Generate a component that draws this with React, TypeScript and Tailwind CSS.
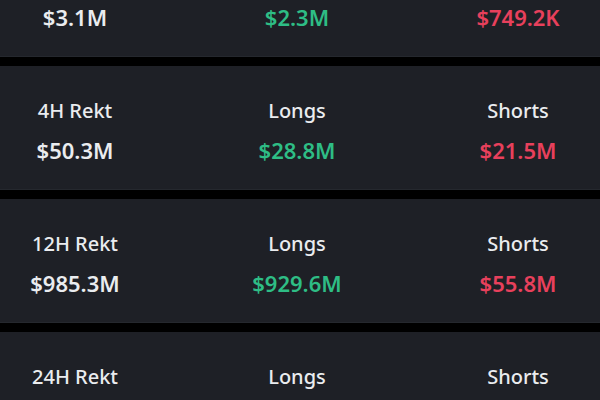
const stats = [
  { period: '1H Rekt', total: '$3.1M', longs: '$2.3M', shorts: '$749.2K' },
  { period: '4H Rekt', total: '$50.3M', longs: '$28.8M', shorts: '$21.5M' },
  { period: '12H Rekt', total: '$985.3M', longs: '$929.6M', shorts: '$55.8M' },
  { period: '24H Rekt', total: '$1.2B', longs: '$1.1B', shorts: '$98.4M' },
];

const Column = ({ label, value, color }: { label: string; value: string; color: string }) => (
  <div className="flex flex-col items-center">
    <div className="text-[20px] leading-[24px] font-medium text-[#eaecef]">{label}</div>
    <div className={`mt-[14px] text-[22px] leading-[26px] font-semibold ${color}`}>{value}</div>
  </div>
);

const App = () => {
  return (
    <div
      className="h-[400px] w-[600px] overflow-hidden bg-black"
      style={{ fontFamily: '"Noto Sans", "Open Sans", sans-serif' }}
    >
      <div className="-mt-[67px] flex flex-col gap-[9px]">
        {stats.map((s) => (
          <div
            key={s.period}
            className="grid h-[124px] grid-cols-[150px_294px_148px] bg-[#1e2026] pt-[33px] border-b border-[#25282e]"
          >
            <Column label={s.period} value={s.total} color="text-[#eaecef]" />
            <Column label="Longs" value={s.longs} color="text-[#2ebd85]" />
            <Column label="Shorts" value={s.shorts} color="text-[#e8405c]" />
          </div>
        ))}
      </div>
    </div>
  );
};

export default App;
